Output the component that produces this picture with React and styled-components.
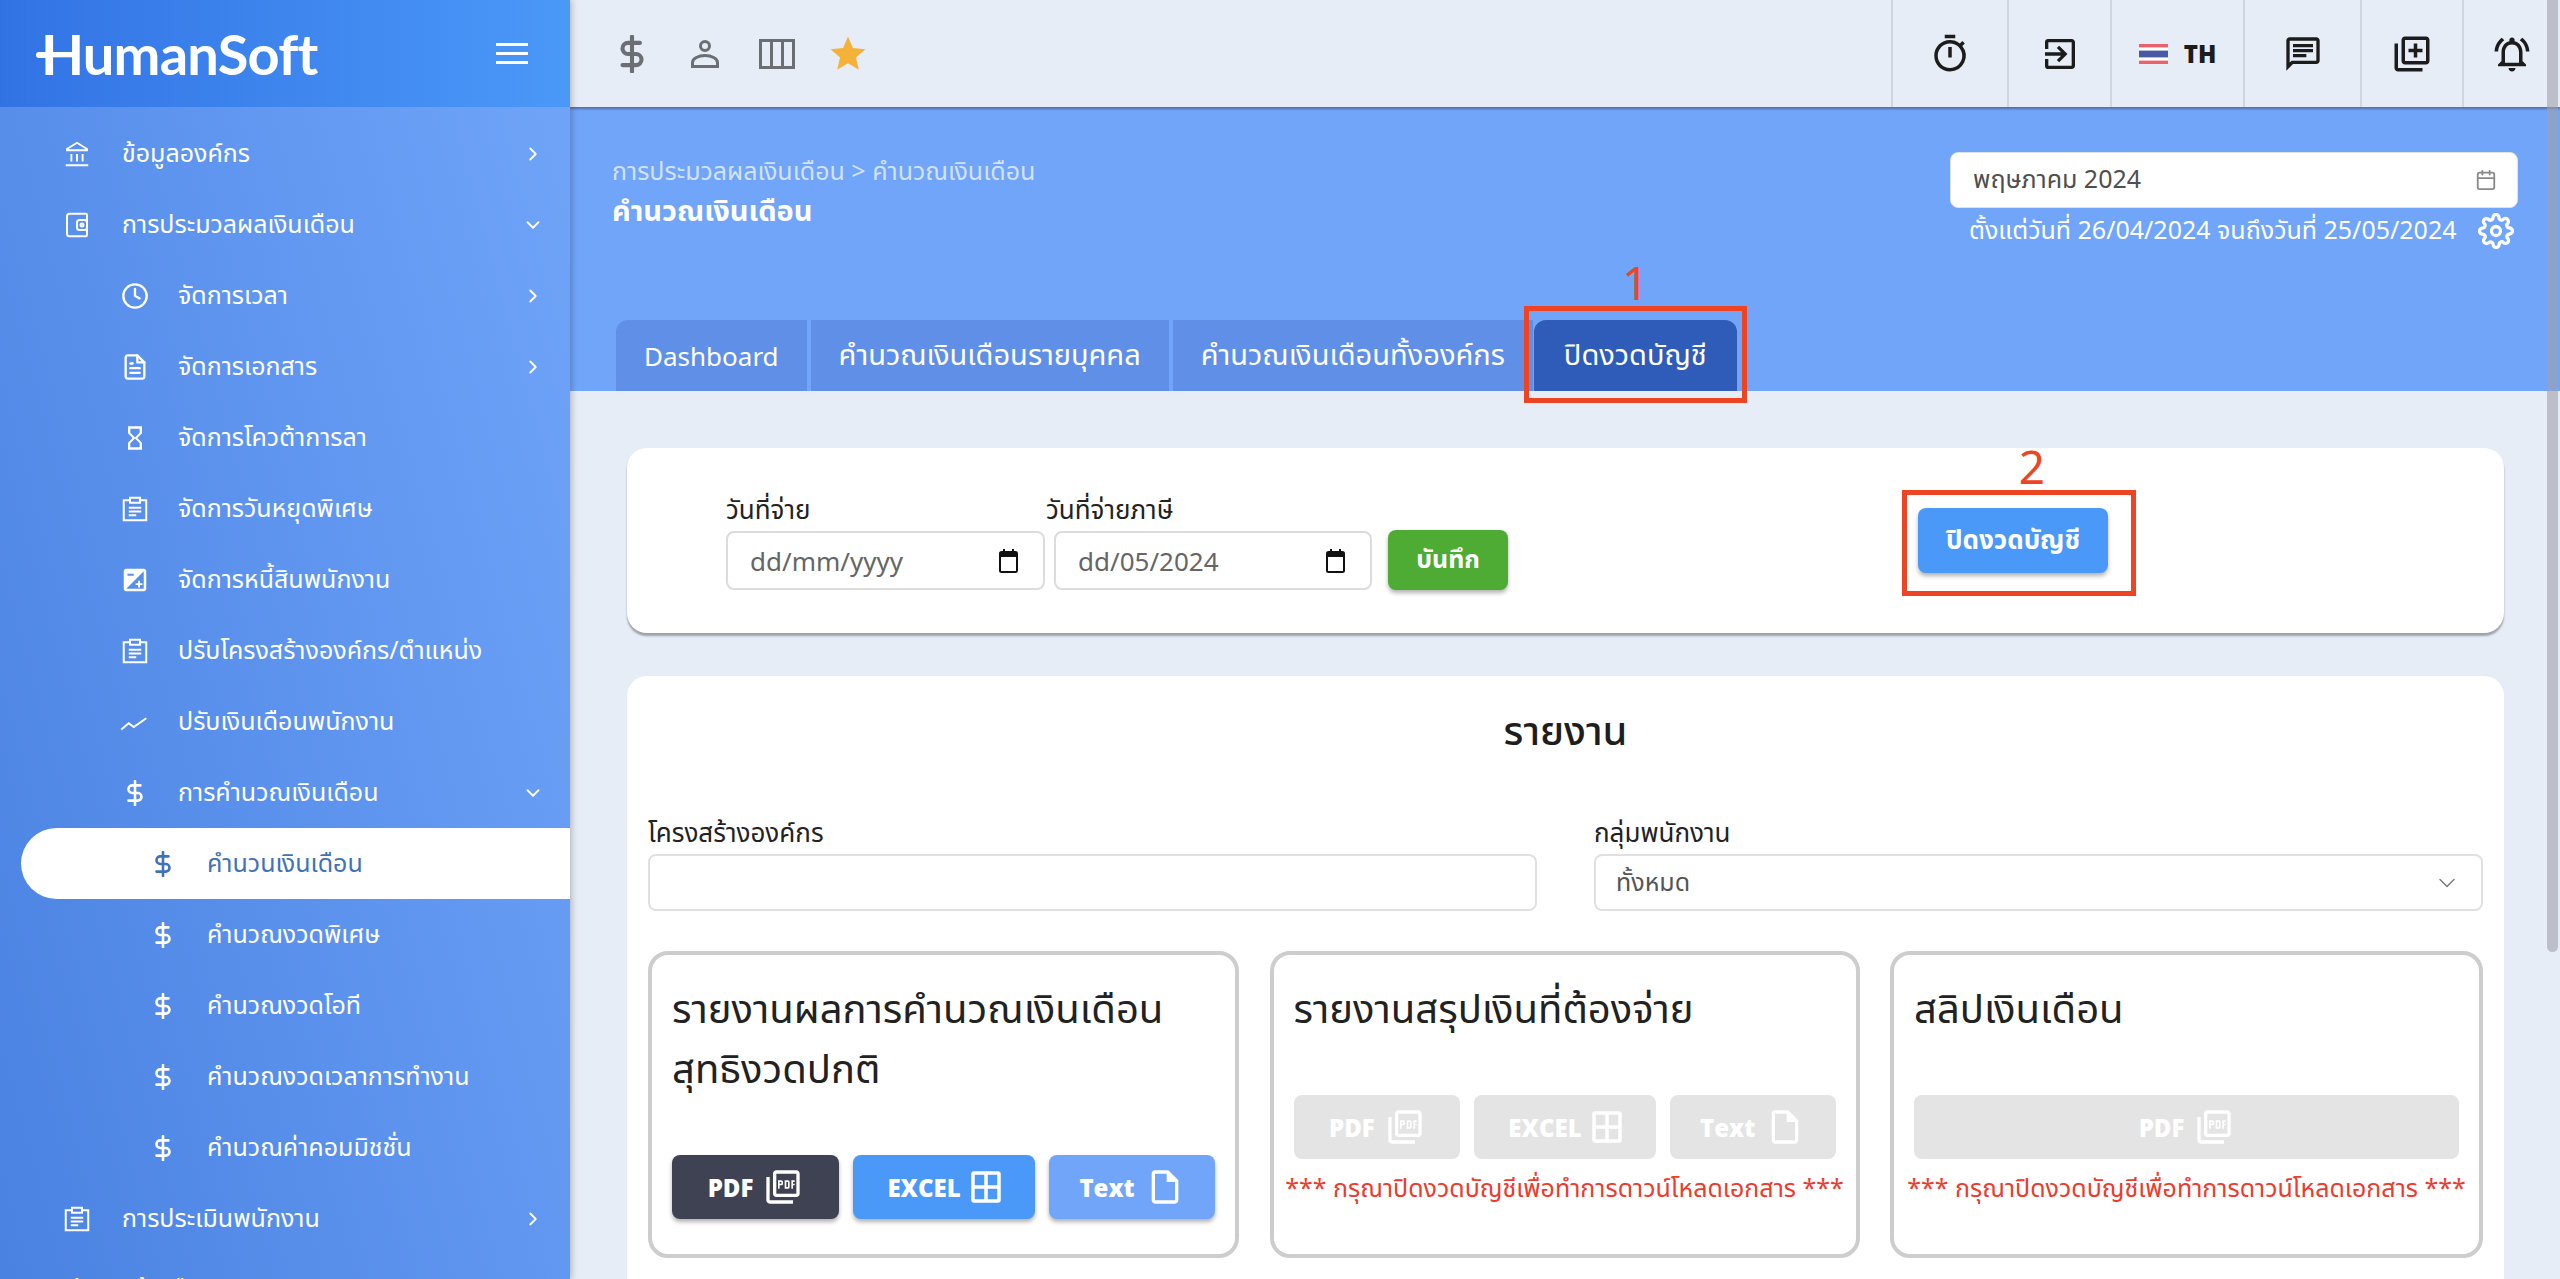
import React from 'react'
import styled, { createGlobalStyle } from 'styled-components'
import {
  MdOutlineTimer,
  MdOutlineExitToApp,
  MdOutlineChat,
  MdOutlineLibraryAdd,
  MdOutlineNotificationsActive,
  MdOutlinePictureAsPdf,
  MdOutlineInsertDriveFile,
  MdStar,
  MdExposure,
  MdOutlineHourglassEmpty,
} from 'react-icons/md'
import {
  FiChevronRight,
  FiChevronDown,
  FiClock,
  FiFileText,
  FiDollarSign,
  FiSettings,
  FiCalendar,
} from 'react-icons/fi'

const FONT = `"Noto Sans", "Noto Sans Thai", "Open Sans", sans-serif`

const GlobalStyle = createGlobalStyle`
  html, body {
    margin: 0;
    height: 100%;
    overflow: hidden;
    font-family: ${FONT};
    background: #e6edf6;
  }
  * { box-sizing: border-box; }
`

const BankIcon = () => (
  <svg width="30" height="30" viewBox="0 0 24 24" fill="none" stroke="currentColor" strokeWidth="1.5">
    <path d="M4 8l8-5 8 5v1H4z" />
    <path d="M7.5 12v6M12 12v6M16.5 12v6M3 21h18" />
  </svg>
)

const WalletIcon = () => (
  <svg width="30" height="30" viewBox="0 0 24 24" fill="none" stroke="currentColor" strokeWidth="1.6">
    <path d="M19 3H6a2 2 0 0 0-2 2v14a2 2 0 0 0 2 2h13a1 1 0 0 0 1-1V4a1 1 0 0 0-1-1z" />
    <rect x="12" y="8" width="8" height="8" rx="2" />
    <circle cx="16" cy="12" r="1.2" />
  </svg>
)

const ClipboardIcon = () => (
  <svg width="30" height="30" viewBox="0 0 24 24" fill="none" stroke="currentColor" strokeWidth="1.6">
    <path d="M8 5H3v16h18V5h-5" />
    <path d="M8 3h8v4H8zM7 11h10M7 14h10M7 17h6" />
  </svg>
)

const LineIcon = () => (
  <svg width="30" height="30" viewBox="0 0 24 24" fill="none" stroke="currentColor" strokeWidth="1.6">
    <path d="M1 18l6-5 4 3 10-7" />
  </svg>
)

const GridIcon = () => (
  <svg width="30" height="32" viewBox="0 0 30 32" fill="none" stroke="currentColor" strokeWidth="3.5">
    <rect x="2" y="2" width="26" height="28" rx="1" />
    <path d="M15 2v28M2 16h26" />
  </svg>
)

const ThaiFlag = () => (
  <svg width="29" height="20" viewBox="0 0 29 20">
    <rect width="29" height="20" fill="#fff" />
    <rect width="29" height="3.4" fill="#e9616b" />
    <rect y="16.6" width="29" height="3.4" fill="#e9616b" />
    <rect y="6.6" width="29" height="6.8" fill="#4a59a6" />
  </svg>
)

const PersonIcon = () => (
  <svg width="30" height="30" viewBox="0 0 30 30" fill="none" stroke="currentColor" strokeWidth="3">
    <circle cx="15" cy="7" r="4.5" />
    <path d="M2.5 27.5v-4c0-4 6-7 12.500-7s12.500 3 12.500 7v4z" />
  </svg>
)

const ColumnsIcon = () => (
  <svg width="36" height="30" viewBox="0 0 36 30" fill="none" stroke="currentColor" strokeWidth="3">
    <rect x="1.500" y="1.500" width="33" height="27" />
    <path d="M12.500 1.500v27M23.500 1.500v27" />
  </svg>
)

const NativeCalendar = () => (
  <svg width="19" height="24" viewBox="0 0 19 24" fill="none">
    <rect x="1" y="3" width="17" height="20" rx="1.500" stroke="#111" strokeWidth="2" />
    <path d="M1 3h17v5H1z" fill="#111" />
    <path d="M5 0v4M14 0v4" stroke="#111" strokeWidth="2" />
  </svg>
)

const MENU = [
  { level: 0, icon: <BankIcon />, label: 'ข้อมูลองค์กร', arrow: 'right' },
  { level: 0, icon: <WalletIcon />, label: 'การประมวลผลเงินเดือน', arrow: 'down' },
  { level: 1, icon: <FiClock size={28} />, label: 'จัดการเวลา', arrow: 'right' },
  { level: 1, icon: <FiFileText size={28} />, label: 'จัดการเอกสาร', arrow: 'right' },
  { level: 1, icon: <MdOutlineHourglassEmpty size={28} />, label: 'จัดการโควต้าการลา' },
  { level: 1, icon: <ClipboardIcon />, label: 'จัดการวันหยุดพิเศษ' },
  { level: 1, icon: <MdExposure size={30} />, label: 'จัดการหนี้สินพนักงาน' },
  { level: 1, icon: <ClipboardIcon />, label: 'ปรับโครงสร้างองค์กร/ตำแหน่ง' },
  { level: 1, icon: <LineIcon />, label: 'ปรับเงินเดือนพนักงาน' },
  { level: 1, icon: <FiDollarSign size={26} strokeWidth={2.4} />, label: 'การคำนวณเงินเดือน', arrow: 'down' },
  { level: 2, icon: <FiDollarSign size={26} strokeWidth={2.4} />, label: 'คำนวนเงินเดือน', active: true },
  { level: 2, icon: <FiDollarSign size={26} strokeWidth={2.4} />, label: 'คำนวณงวดพิเศษ' },
  { level: 2, icon: <FiDollarSign size={26} strokeWidth={2.4} />, label: 'คำนวณงวดโอที' },
  { level: 2, icon: <FiDollarSign size={26} strokeWidth={2.4} />, label: 'คำนวณงวดเวลาการทำงาน' },
  { level: 2, icon: <FiDollarSign size={26} strokeWidth={2.4} />, label: 'คำนวณค่าคอมมิชชั่น' },
  { level: 0, icon: <ClipboardIcon />, label: 'การประเมินพนักงาน', arrow: 'right' },
  { level: 0, icon: <BankIcon />, label: 'แจ้งเตือน', arrow: 'right' },
]

const INDENT = [57, 115, 143]
const TEXT_GAP = [25, 23, 24]

const TABS = [
  { label: 'Dashboard', latin: true },
  { label: 'คำนวณเงินเดือนรายบุคคล' },
  { label: 'คำนวณเงินเดือนทั้งองค์กร' },
]

export default function App() {
  return (
    <Shell>
      <GlobalStyle />
      <Sidebar>
        <Brand>
          <Logo>HumanSoft</Logo>
          <Burger>
            <span />
            <span />
            <span />
          </Burger>
        </Brand>
        <Nav>
          {MENU.map((item) => (
            <NavRow key={item.label} $level={item.level} $active={item.active}>
              <NavIcon>{item.icon}</NavIcon>
              <NavLabel $level={item.level}>{item.label}</NavLabel>
              {item.arrow === 'right' && <NavArrow><FiChevronRight size={22} /></NavArrow>}
              {item.arrow === 'down' && <NavArrow><FiChevronDown size={22} /></NavArrow>}
            </NavRow>
          ))}
        </Nav>
      </Sidebar>

      <Main>
        <Topbar>
          <QuickLinks>
            <QuickIcon><FiDollarSign size={38} strokeWidth={2.6} /></QuickIcon>
            <QuickIcon><PersonIcon /></QuickIcon>
            <QuickIcon><ColumnsIcon /></QuickIcon>
            <QuickIcon $star><MdStar size={42} /></QuickIcon>
          </QuickLinks>
          <TopCell $w={116}><MdOutlineTimer size={42} /></TopCell>
          <TopCell $w={103}><MdOutlineExitToApp size={40} /></TopCell>
          <TopCell $w={133}>
            <ThaiFlag />
            <LangCode>TH</LangCode>
          </TopCell>
          <TopCell $w={117}><MdOutlineChat size={40} /></TopCell>
          <TopCell $w={102}><MdOutlineLibraryAdd size={42} /></TopCell>
          <TopCell $w={98}><MdOutlineNotificationsActive size={42} /></TopCell>
        </Topbar>

        <Hero>
          <HeroHead>
            <div>
              <Crumbs>การประมวลผลเงินเดือน &gt; คำนวณเงินเดือน</Crumbs>
              <PageTitle>คำนวณเงินเดือน</PageTitle>
            </div>
            <PeriodBox>
              <MonthField>
                <span>พฤษภาคม 2024</span>
                <FiCalendar size={22} color="#8a8a8a" />
              </MonthField>
              <PeriodNote>
                <span>ตั้งแต่วันที่ 26/04/2024 จนถึงวันที่ 25/05/2024</span>
                <FiSettings size={36} strokeWidth={2.2} />
              </PeriodNote>
            </PeriodBox>
          </HeroHead>
          <TabBar>
            {TABS.map((t) => (
              <Tab key={t.label} $latin={t.latin}>{t.label}</Tab>
            ))}
            <Tab $active>
              ปิดงวดบัญชี
              <Callout $inset="-14px -10px -12px -10px">
                <CalloutNumber>1</CalloutNumber>
              </Callout>
            </Tab>
          </TabBar>
        </Hero>

        <Content>
          <CloseCard>
            <DateGroup>
              <Field $w={319}>
                <FieldLabel>วันที่จ่าย</FieldLabel>
                <DateBox>
                  dd/mm/yyyy
                  <NativeCalendar />
                </DateBox>
              </Field>
              <Field $w={318}>
                <FieldLabel $shift={-8}>วันที่จ่ายภาษี</FieldLabel>
                <DateBox>
                  dd/05/2024
                  <NativeCalendar />
                </DateBox>
              </Field>
              <SaveButton>บันทึก</SaveButton>
            </DateGroup>
            <CloseButton>
              ปิดงวดบัญชี
              <Callout $inset="-18px -28px -23px -16px">
                <CalloutNumber $dx={13}>2</CalloutNumber>
              </Callout>
            </CloseButton>
          </CloseCard>

          <ReportCard>
            <ReportHeading>รายงาน</ReportHeading>
            <FilterGrid>
              <div>
                <FieldLabel>โครงสร้างองค์กร</FieldLabel>
                <SelectBox />
              </div>
              <div>
                <FieldLabel>กลุ่มพนักงาน</FieldLabel>
                <SelectBox>
                  ทั้งหมด
                  <FiChevronDown size={28} strokeWidth={1.2} color="#777" />
                </SelectBox>
              </div>
            </FilterGrid>
            <TileGrid>
              <Tile>
                <TileTitle>รายงานผลการคำนวณเงินเดือน สุทธิงวดปกติ</TileTitle>
                <TileButtons>
                  <ExportButton $bg="#3e4253"><span>PDF</span><MdOutlinePictureAsPdf size={40} /></ExportButton>
                  <ExportButton $bg="#4a98f8"><span>EXCEL</span><GridIcon /></ExportButton>
                  <ExportButton $bg="#70a5f9"><span>Text</span><MdOutlineInsertDriveFile size={40} /></ExportButton>
                </TileButtons>
              </Tile>
              <Tile>
                <TileTitle>รายงานสรุปเงินที่ต้องจ่าย</TileTitle>
                <TileButtons>
                  <ExportButton $off><span>PDF</span><MdOutlinePictureAsPdf size={40} /></ExportButton>
                  <ExportButton $off><span>EXCEL</span><GridIcon /></ExportButton>
                  <ExportButton $off><span>Text</span><MdOutlineInsertDriveFile size={40} /></ExportButton>
                </TileButtons>
                <Warning>*** กรุณาปิดงวดบัญชีเพื่อทำการดาวน์โหลดเอกสาร ***</Warning>
              </Tile>
              <Tile>
                <TileTitle>สลิปเงินเดือน</TileTitle>
                <TileButtons $single>
                  <ExportButton $off><span>PDF</span><MdOutlinePictureAsPdf size={40} /></ExportButton>
                </TileButtons>
                <Warning>*** กรุณาปิดงวดบัญชีเพื่อทำการดาวน์โหลดเอกสาร ***</Warning>
              </Tile>
            </TileGrid>
          </ReportCard>
        </Content>
      </Main>
      <ScrollThumb />
    </Shell>
  )
}

const Shell = styled.div`
  position: relative;
  display: grid;
  grid-template-columns: 570px 1fr;
  height: 100vh;
  overflow: hidden;
`

const Sidebar = styled.aside`
  position: relative;
  z-index: 2;
  background: linear-gradient(75deg, #4a82e2, #70a5f9);
  box-shadow: 2px 0 6px rgba(0, 0, 0, 0.22);
  color: #fff;
  overflow: hidden;
`

const Brand = styled.div`
  height: 107px;
  display: flex;
  align-items: center;
  justify-content: space-between;
  padding: 0 42px 0 36px;
  background: linear-gradient(90deg, #3273e4, #4a98f8);
`

const Logo = styled.div`
  position: relative;
  padding-left: 5px;
  font-family: "Lato", sans-serif;
  font-size: 56px;
  font-weight: 700;
  letter-spacing: -0.8px;
  &::before {
    content: "";
    position: absolute;
    left: 0;
    top: 50%;
    width: 14px;
    height: 6px;
    margin-top: -2px;
    border-radius: 3px;
    background: #fff;
  }
`

const Burger = styled.div`
  display: flex;
  flex-direction: column;
  gap: 6px;
  span {
    display: block;
    width: 32px;
    height: 3px;
    background: #fff;
  }
`

const Nav = styled.nav`
  padding-top: 11px;
`

const NavRow = styled.div`
  display: flex;
  align-items: center;
  height: 71px;
  padding-right: 26px;
  padding-left: ${({ $level, $active }) => INDENT[$level] - ($active ? 21 : 0)}px;
  margin-left: ${({ $active }) => ($active ? '21px' : '0')};
  color: ${({ $active }) => ($active ? '#3f72b8' : '#fff')};
  background: ${({ $active }) => ($active ? '#fff' : 'transparent')};
  border-radius: ${({ $active }) => ($active ? '36px 0 0 36px' : '0')};
`

const NavIcon = styled.div`
  width: 40px;
  display: flex;
  justify-content: center;
  flex-shrink: 0;
`

const NavLabel = styled.div`
  margin-left: ${({ $level }) => TEXT_GAP[$level]}px;
  font-size: 25px;
  white-space: nowrap;
`

const NavArrow = styled.div`
  margin-left: auto;
  display: flex;
`

const Main = styled.main`
  display: flex;
  flex-direction: column;
  min-width: 0;
  height: 100vh;
`

const Topbar = styled.header`
  flex: 0 0 107px;
  display: flex;
  align-items: stretch;
  background: #e6edf6;
  box-shadow: 0 2px 2px rgba(60, 70, 90, 0.55);
  position: relative;
  z-index: 1;
`

const QuickLinks = styled.div`
  flex: 1;
  display: flex;
  align-items: center;
  gap: 36px;
  padding-left: 43px;
`

const QuickIcon = styled.span`
  flex: 0 0 36px;
  display: flex;
  justify-content: center;
  margin-left: ${({ $star }) => ($star ? '-4px' : '0')};
  color: ${({ $star }) => ($star ? '#f5b23a' : '#6b6f73')};
`

const TopCell = styled.div`
  flex: 0 0 ${({ $w }) => $w}px;
  display: flex;
  align-items: center;
  justify-content: center;
  gap: 16px;
  border-left: 2px solid #cfd6df;
  color: #1c1c1c;
`

const LangCode = styled.span`
  font-family: "Open Sans", sans-serif;
  font-size: 24px;
  font-weight: 800;
`

const Hero = styled.section`
  flex: 0 0 284px;
  display: flex;
  flex-direction: column;
  justify-content: space-between;
  background: #70a5f9;
  padding: 45px 42px 0 42px;
`

const HeroHead = styled.div`
  display: flex;
  justify-content: space-between;
  align-items: flex-start;
`

const Crumbs = styled.div`
  font-size: 25px;
  line-height: 36px;
  color: #d3e2fb;
`

const PageTitle = styled.div`
  font-size: 29px;
  line-height: 36px;
  margin-top: 4px;
  font-weight: 700;
  color: #fff;
`

const PeriodBox = styled.div`
  width: 568px;
`

const MonthField = styled.div`
  height: 56px;
  display: flex;
  align-items: center;
  justify-content: space-between;
  padding: 0 20px 0 22px;
  background: #fff;
  border: 1px solid #dbe3ee;
  border-radius: 8px;
  font-size: 25px;
  color: #4f4f4f;
`

const PeriodNote = styled.div`
  display: flex;
  align-items: center;
  justify-content: space-between;
  padding: 4px 4px 0 19px;
  font-size: 25px;
  color: #fff;
`

const TabBar = styled.div`
  display: flex;
  gap: 4px;
  padding-left: 4px;
`

const Tab = styled.div`
  position: relative;
  height: 71px;
  display: flex;
  align-items: center;
  padding: 0 ${({ $active }) => ($active ? '30px' : '28px')};
  margin-left: ${({ $active }) => ($active ? '-3px' : '0')};
  font-size: ${({ $latin }) => ($latin ? '26px' : '29px')};
  color: #fff;
  white-space: nowrap;
  background: ${({ $active }) => ($active ? '#2f5cb8' : '#5f8fe6')};
  border-radius: ${({ $active }) => ($active ? '12px 12px 0 0' : '0')};
  &:first-child {
    border-top-left-radius: 12px;
  }
`

const Callout = styled.div`
  position: absolute;
  inset: ${({ $inset }) => $inset};
  border: 5px solid #ee4424;
  pointer-events: none;
`

const CalloutNumber = styled.span`
  position: absolute;
  left: 50%;
  bottom: 100%;
  margin-bottom: 4px;
  transform: translateX(calc(-50% + ${({ $dx = 0 }) => $dx}px));
  font-size: 46px;
  font-weight: 400;
  line-height: 50px;
  color: #ee4424;
`

const Content = styled.div`
  flex: 1;
  display: flex;
  flex-direction: column;
  gap: 43px;
  padding: 57px 56px 0 57px;
  background: #e6edf6;
`

const CloseCard = styled.section`
  flex: 0 0 185px;
  display: flex;
  align-items: center;
  padding-left: 99px;
  background: #fff;
  border-radius: 20px;
  box-shadow: 0 3px 2px rgba(70, 70, 80, 0.45);
`

const DateGroup = styled.div`
  display: flex;
  align-items: flex-end;
  gap: 9px;
  margin-top: 3px;
`

const Field = styled.div`
  width: ${({ $w }) => $w}px;
`

const FieldLabel = styled.div`
  margin-left: ${({ $shift = 0 }) => $shift}px;
  font-size: 26px;
  line-height: 30px;
  margin-bottom: 7px;
  color: #222;
`

const DateBox = styled.div`
  height: 59px;
  display: flex;
  align-items: center;
  justify-content: space-between;
  padding: 0 25px 0 22px;
  border: 2px solid #dcdcdc;
  border-radius: 8px;
  font-size: 26px;
  color: #666;
`

const SaveButton = styled.button`
  width: 120px;
  height: 60px;
  margin-left: 7px;
  border: 0;
  border-radius: 8px;
  background: #4eab33;
  color: #fff;
  font-family: ${FONT};
  font-size: 25px;
  font-weight: 700;
  box-shadow: 0 3px 4px rgba(0, 0, 0, 0.3);
`

const CloseButton = styled.button`
  position: relative;
  width: 190px;
  height: 65px;
  margin-left: 410px;
  border: 0;
  border-radius: 8px;
  background: #4a98f8;
  color: #fff;
  font-family: ${FONT};
  font-size: 26px;
  font-weight: 700;
  box-shadow: 0 3px 4px rgba(0, 0, 0, 0.3);
`

const ReportCard = styled.section`
  flex: 1;
  padding: 28px 21px 0;
  background: #fff;
  border-radius: 20px 20px 0 0;
`

const ReportHeading = styled.h2`
  margin: 0;
  font-size: 40px;
  font-weight: 500;
  line-height: 52px;
  text-align: center;
  color: #1e1e1e;
`

const FilterGrid = styled.div`
  display: grid;
  grid-template-columns: 1fr 1fr;
  gap: 57px;
  margin-top: 61px;
`

const SelectBox = styled.div`
  height: 57px;
  display: flex;
  align-items: center;
  justify-content: space-between;
  padding: 0 20px;
  border: 2px solid #e0e0e0;
  border-radius: 8px;
  font-size: 25px;
  color: #555;
`

const TileGrid = styled.div`
  display: grid;
  grid-template-columns: 591px 590px 593px;
  justify-content: space-between;
  margin-top: 40px;
`

const Tile = styled.article`
  height: 307px;
  padding: 23px 20px 0;
  border: 4px solid #cdcdcd;
  border-radius: 20px;
`

const TileTitle = styled.h3`
  margin: 0;
  font-size: 40px;
  font-weight: 400;
  line-height: 60px;
  color: #222;
`

const TileButtons = styled.div`
  display: grid;
  grid-template-columns: ${({ $single }) => ($single ? '1fr' : '167fr 182fr 166fr')};
  gap: 14px;
  margin-top: 57px;
`

const ExportButton = styled.div`
  height: 64px;
  display: flex;
  align-items: center;
  justify-content: center;
  gap: 10px;
  border-radius: 8px;
  color: #fff;
  font-family: "Open Sans", sans-serif;
  font-size: 24px;
  font-weight: 800;
  background: ${({ $off, $bg }) => ($off ? '#e4e4e4' : $bg)};
  box-shadow: ${({ $off }) => ($off ? 'none' : '0 3px 4px rgba(0, 0, 0, 0.3)')};
`

const Warning = styled.p`
  margin: 13px -12px 0;
  font-size: 25px;
  line-height: 30px;
  text-align: center;
  white-space: nowrap;
  color: #ef3a2d;
`

const ScrollThumb = styled.div`
  position: absolute;
  z-index: 3;
  top: 0;
  right: 2px;
  width: 11px;
  height: 952px;
  border-radius: 0 0 6px 6px;
  background: rgba(160, 160, 170, 0.6);
`
